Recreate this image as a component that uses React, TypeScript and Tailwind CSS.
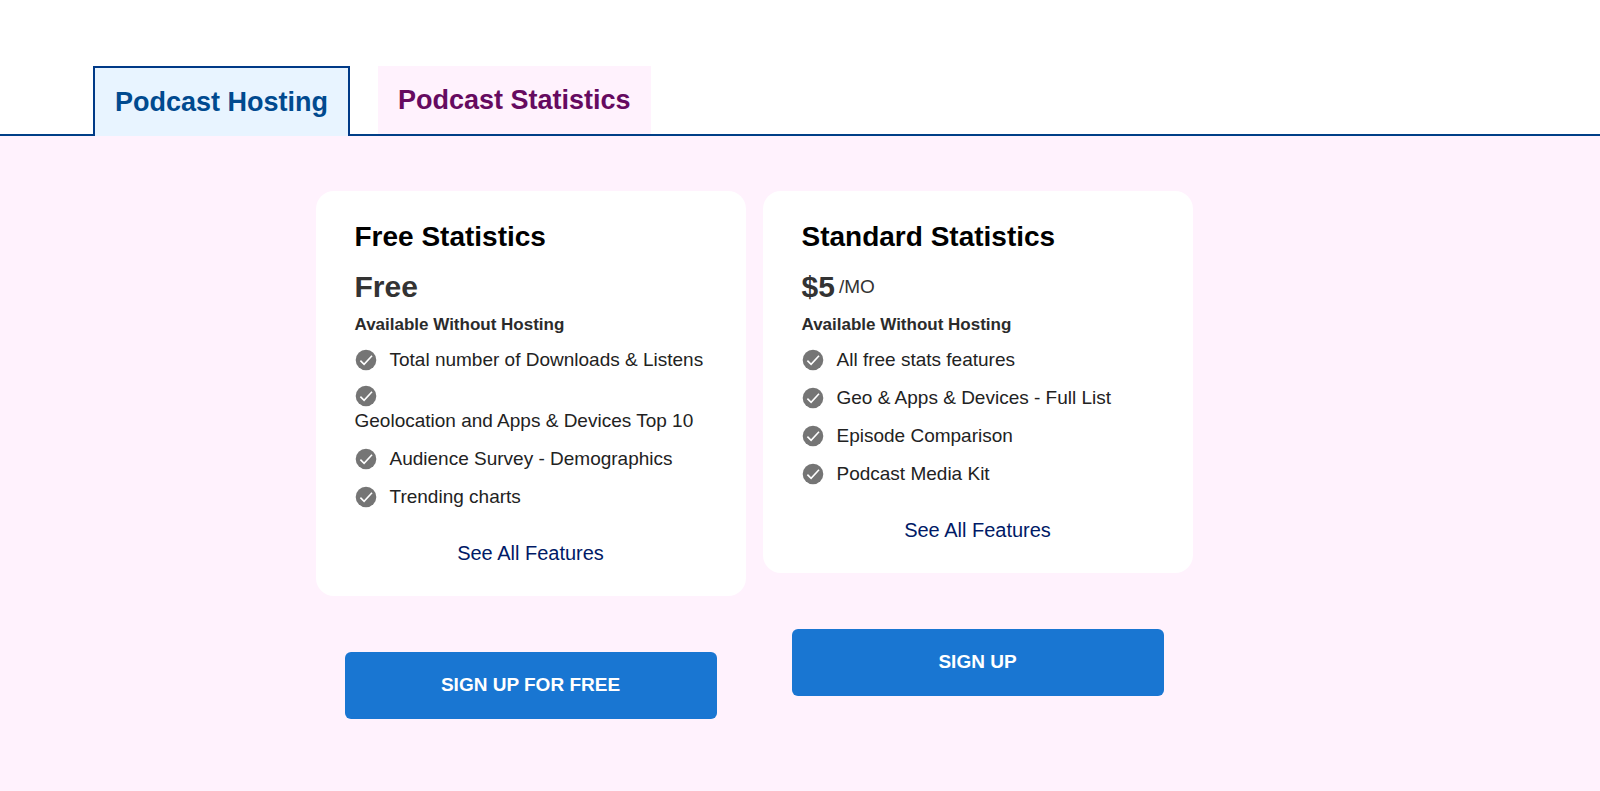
import React from "react";

type Plan = {
  name: string;
  price: string;
  period?: string;
  features: { label: string; stacked?: boolean }[];
  action: string;
};

const plans: Plan[] = [
  {
    name: "Free Statistics",
    price: "Free",
    features: [
      { label: "Total number of Downloads & Listens" },
      { label: "Geolocation and Apps & Devices Top 10", stacked: true },
      { label: "Audience Survey - Demographics" },
      { label: "Trending charts" },
    ],
    action: "SIGN UP FOR FREE",
  },
  {
    name: "Standard Statistics",
    price: "$5",
    period: "/MO",
    features: [
      { label: "All free stats features" },
      { label: "Geo & Apps & Devices - Full List" },
      { label: "Episode Comparison" },
      { label: "Podcast Media Kit" },
    ],
    action: "SIGN UP",
  },
];

const CheckIcon: React.FC = () => (
  <svg className="w-[22px] h-[22px] shrink-0" viewBox="-11 -11 22 22" aria-hidden="true">
    <circle r="10.3" fill="#757575" />
    <path d="M-5.6 0.6 L-1.9 4.4 L6 -4.2" fill="none" stroke="#fff" strokeWidth="1.6" />
  </svg>
);

const PlanCard: React.FC<{ plan: Plan }> = ({ plan }) => (
  <div className="w-full max-w-[430px]">
    <div className="bg-white rounded-[18px] px-[39px] py-7">
      <h2 className="text-[28px] leading-9 font-bold text-black">{plan.name}</h2>
      <p className="mt-3.5 flex items-center gap-1 leading-9 text-[#333]">
        <span className="text-[30px] font-bold">{plan.price}</span>
        {plan.period && <span className="text-[19px]">{plan.period}</span>}
      </p>
      <p className="mt-2 text-[17px] leading-6 font-bold text-[#2b2b2b]">
        Available Without Hosting
      </p>
      <ul className="mt-2.5 flex flex-col gap-3 text-[19px] leading-[26px] text-[#222]">
        {plan.features.map((feature) => (
          <li
            key={feature.label}
            className={feature.stacked ? "flex flex-col gap-px" : "flex items-center gap-[13px]"}
          >
            <CheckIcon />
            <span>{feature.label}</span>
          </li>
        ))}
      </ul>
      <div className="mt-7 text-center">
        <a href="#features" className="block text-[20px] leading-[30px] text-[#001a66]">
          See All Features
        </a>
      </div>
    </div>
    <div className="mt-14 px-[29px]">
      <button className="w-full h-[67px] rounded-md bg-[#1976d2] text-white text-[19px] font-bold">
        {plan.action}
      </button>
    </div>
  </div>
);

const App: React.FC = () => {
  return (
    <div className="min-h-screen flex flex-col bg-white font-['Liberation_Sans',Arial,sans-serif]">
      <nav className="pt-[66px] flex items-stretch text-[27px] leading-8 font-bold">
        <div className="w-[93px] border-b-2 border-[#003f87]" />
        <button className="px-5 py-[18px] border-2 border-b-0 border-[#003a87] bg-[#e8f4ff] text-[#004a8f]">
          Podcast Hosting
        </button>
        <div className="w-7 border-b-2 border-[#003f87]" />
        <button className="px-5 py-[18px] border-b-2 border-[#003f87] bg-[#fff2fd] text-[#660a60]">
          Podcast Statistics
        </button>
        <div className="grow border-b-2 border-[#003f87]" />
      </nav>
      <main className="grow bg-[#fff2fd] pt-[55px] pb-[71px] pr-[92px] flex items-start justify-center gap-[17px]">
        {plans.map((plan) => (
          <PlanCard key={plan.name} plan={plan} />
        ))}
      </main>
    </div>
  );
};

export default App;
